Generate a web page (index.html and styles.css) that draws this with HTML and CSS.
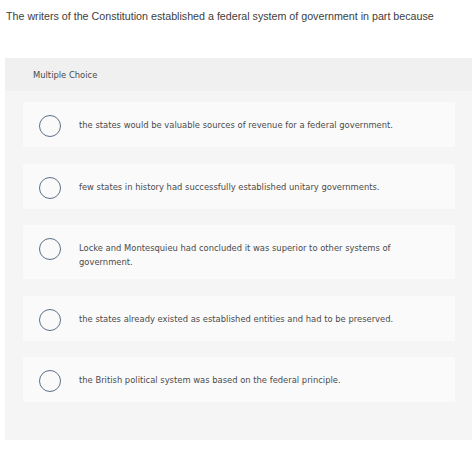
FILE: index.html
```html
<!DOCTYPE html>
<html>
<head>
<meta charset="utf-8">
<link rel="stylesheet" href="styles.css">
</head>
<body>
<p class="question">The writers of the Constitution established a federal system of government in part because</p>
<section class="panel">
  <div class="panel-head">Multiple Choice</div>
  <div class="options">
    <div class="option"><span class="radio"></span><span class="label">the states would be valuable sources of revenue for a federal government.</span></div>
    <div class="option"><span class="radio"></span><span class="label">few states in history had successfully established unitary governments.</span></div>
    <div class="option"><span class="radio"></span><span class="label">Locke and Montesquieu had concluded it was superior to other systems of government.</span></div>
    <div class="option"><span class="radio"></span><span class="label">the states already existed as established entities and had to be preserved.</span></div>
    <div class="option"><span class="radio"></span><span class="label">the British political system was based on the federal principle.</span></div>
  </div>
</section>
</body>
</html>
```
FILE: styles.css
```css
html, body { margin: 0; padding: 0; background: #fff; }
body { width: 474px; height: 449px; overflow: hidden; font-family: "Liberation Sans", Arial, sans-serif; color: #333; }
.question {
  margin: 0;
  padding: 9px 0 0 6px;
  font-size: 10.7px;
  line-height: 14px;
  color: #404040;
  height: 58px;
  box-sizing: border-box;
}
.panel {
  margin-left: 5px;
  width: 467px;
  height: 382px;
  background: #f5f5f5;
}
.panel-head {
  height: 33px;
  background: #f0f0f0;
  padding-left: 28px;
  display: flex;
  align-items: center;
  font-family: "DejaVu Sans", sans-serif;
  font-size: 8.4px;
  color: #484848;
}
.options {
  display: flex;
  flex-direction: column;
  gap: 16.5px;
  padding: 11px 17px 0 18px;
}
.option {
  background: #fafafa;
  display: flex;
  align-items: flex-start;
  padding: 13px 26px 10px 16px;
  box-sizing: border-box;
  gap: 18px;
}
.radio {
  flex: none;
  width: 22px;
  height: 22px;
  border: 1.3px solid #5d7189;
  border-radius: 50%;
  box-sizing: border-box;
}
.label {
  font-family: "DejaVu Sans", sans-serif;
  font-size: 8.4px;
  line-height: 13.5px;
  color: #4a4a4a;
  padding-top: 4px;
}
```
